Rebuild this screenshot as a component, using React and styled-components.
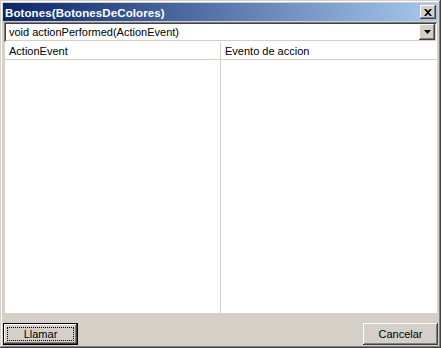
import styled, { createGlobalStyle } from "styled-components";

const GlobalStyle = createGlobalStyle`
    html, body{
        margin: 0;
        padding: 0;
        background: #d4d0c8;
    }
    *{
        box-sizing: border-box;
    }
`;

const raised = `
    box-shadow: inset -1px -1px #404040, inset 1px 1px #ffffff, inset -2px -2px #808080, inset 2px 2px #d4d0c8;
`;

export default function App(){
    return(
        <>
            <GlobalStyle />
            <Window>
                <TitleBar>
                    <span>Botones(BotonesDeColores)</span>
                    <CloseButton>
                        <svg width="8" height="7" viewBox="0 0 8 7">
                            <path d="M0 0h2l2 2 2-2h2L5 3.5 8 7H6L4 5 2 7H0l3-3.5z" fill="#000" />
                        </svg>
                    </CloseButton>
                </TitleBar>
                <Combo>
                    <span>void actionPerformed(ActionEvent)</span>
                    <DropButton>
                        <svg width="7" height="4" viewBox="0 0 7 4">
                            <path d="M0 0h7L3.5 4z" fill="#000" />
                        </svg>
                    </DropButton>
                </Combo>
                <Table>
                    <Column>
                        <HeaderCell>ActionEvent</HeaderCell>
                    </Column>
                    <Column last>
                        <HeaderCell>Evento de accion</HeaderCell>
                    </Column>
                </Table>
                <ButtonRow>
                    <Button primary>
                        <Focus>Llamar</Focus>
                    </Button>
                    <Button>Cancelar</Button>
                </ButtonRow>
            </Window>
        </>
    );
}

const Window = styled.div`
    width: 441px;
    height: 348px;
    padding: 3px;
    display: flex;
    flex-direction: column;
    background: #d4d0c8;
    font-family: "Liberation Sans", Arial, sans-serif;
    font-size: 11px;
    color: #000;
    box-shadow: inset -1px -1px #404040, inset 1px 1px #d4d0c8, inset -2px -2px #808080, inset 2px 2px #ffffff;
`;

const TitleBar = styled.div`
    height: 18px;
    flex: none;
    display: flex;
    align-items: center;
    justify-content: space-between;
    padding: 0 2px 0 2px;
    background: linear-gradient(to right, #0a246a, #a6caf0);
    color: #fff;
    font-weight: bold;
    font-size: 11.5px;
    letter-spacing: 0.1px;
    span{
        padding-top: 1px;
    }
`;

const CloseButton = styled.div`
    width: 16px;
    height: 14px;
    background: #d4d0c8;
    display: flex;
    align-items: center;
    justify-content: center;
    ${raised}
    svg{
        margin-left: -1px;
    }
`;

const Combo = styled.div`
    margin: 1px 1px 0 1px;
    height: 20px;
    flex: none;
    display: flex;
    align-items: center;
    justify-content: space-between;
    background: #fff;
    padding: 2px;
    box-shadow: inset 1px 1px #808080, inset -1px -1px #ffffff, inset 2px 2px #404040, inset -2px -2px #d4d0c8;
    span{
        padding-left: 3px;
    }
`;

const DropButton = styled.div`
    width: 16px;
    height: 16px;
    background: #d4d0c8;
    display: flex;
    align-items: center;
    justify-content: center;
    ${raised}
`;

const Table = styled.div`
    flex: 1;
    margin: 0 1px;
    display: flex;
    background: #fff;
    border-left: 1px solid #d4d0c8;
`;

const Column = styled.div`
    width: ${(p) => (p.last ? "auto" : "216px")};
    flex: ${(p) => (p.last ? "1" : "none")};
    border-right: ${(p) => (p.last ? "none" : "1px solid #d4d0c8")};
`;

const HeaderCell = styled.div`
    height: 18px;
    padding: 3px 0 0 4px;
    border-bottom: 1px solid #d4d0c8;
    white-space: nowrap;
`;

const ButtonRow = styled.div`
    height: 32px;
    flex: none;
    display: flex;
    align-items: flex-end;
    justify-content: space-between;
`;

const Button = styled.div`
    width: 75px;
    height: 22px;
    display: flex;
    align-items: center;
    justify-content: center;
    background: #d4d0c8;
    padding: ${(p) => (p.primary ? "4px" : "0")};
    box-shadow: ${(p) =>
        p.primary
            ? "inset 0 0 0 1px #000, inset -2px -2px #404040, inset 2px 2px #ffffff, inset -3px -3px #808080"
            : "inset -1px -1px #404040, inset 1px 1px #ffffff, inset -2px -2px #808080, inset 2px 2px #d4d0c8"};
`;

const Focus = styled.div`
    width: 100%;
    height: 100%;
    border: 1px dotted #000;
    display: flex;
    align-items: center;
    justify-content: center;
`;
